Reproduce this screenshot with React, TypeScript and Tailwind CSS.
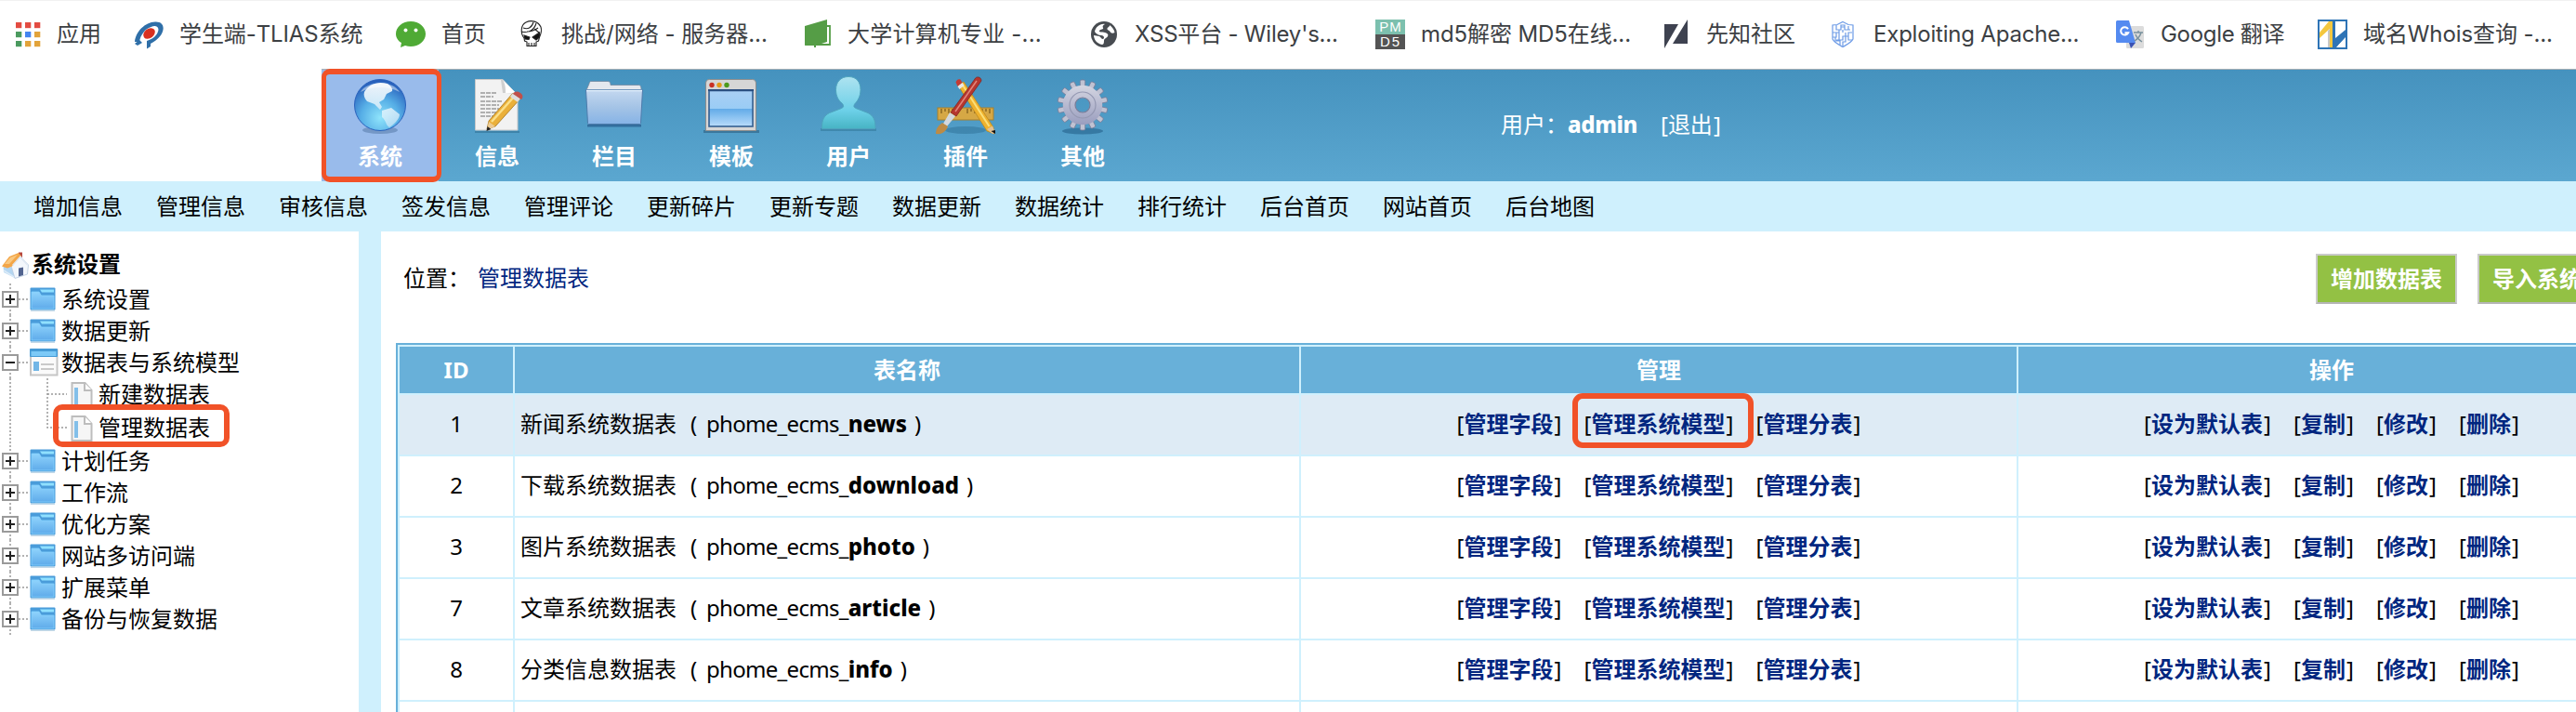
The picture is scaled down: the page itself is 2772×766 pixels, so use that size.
import type { ReactNode } from "react";

const ring = "pointer-events-none absolute border-[#f15228]";

function AppsIcon() {
  const colors = ["#e34b41", "#e34b41", "#e34b41", "#4b9a5f", "#4485f0", "#e2a33a", "#4b9a5f", "#e2a33a", "#e2a33a"];
  return (
    <svg viewBox="0 0 32 32" className="size-8">
      {colors.map((c, i) => (
        <rect key={i} x={5 + (i % 3) * 10} y={3 + Math.floor(i / 3) * 10} width="6.3" height="6.2" fill={c} />
      ))}
    </svg>
  );
}

function TliasIcon() {
  return (
    <svg viewBox="0 0 32 32" className="size-8">
      <path d="M1 24C2 13 12 3 23 2.500c9-.5 11 7 6 14.500-3 4-7 7-11 9v3l-4 2.500V23c7-2 12-7 12.500-12 0-4-4-5-8-3C12 10 7 17 6 24z" fill="#2f6fa8" />
      <path d="M1 26l5-4 3 3-5 3z" fill="#2f6fa8" />
      <ellipse cx="16.500" cy="15" rx="7" ry="5" transform="rotate(-38 16.500 15)" fill="#d8301f" />
    </svg>
  );
}

function ChatIcon() {
  return (
    <svg viewBox="0 0 32 32" className="size-8">
      <path d="M16 2c9 0 16 6 16 13.500S25 29 16 29c-2 0-4-.3-6-1l-5 2 1-5C2 23 0 19 0 15.500 0 8 7 2 16 2z" fill="#4faa35" />
      <circle cx="10.500" cy="11.500" r="2" fill="#fff" />
      <circle cx="21.500" cy="11.500" r="2" fill="#fff" />
    </svg>
  );
}

function SkullIcon() {
  return (
    <svg viewBox="0 0 32 32" className="size-8" fill="none" stroke="#222" strokeWidth="1.100">
      <path d="M9 20C5 15 5 6 11 3c6-3 13-1 16 5 1.500 5 0 8-1.500 11l-1 4-2.500 1v4.500H12V24l-2.500-1z" />
      <path d="M8 9c5 2 9 0 11-6M6 13c8 2 14-2 16-9M12 13c4 0 8-1 12-4M20 10l5 4" />
      <path d="M9 17l6 2-1 2.500-4-.5zM25.500 14L18 19l4 3 3.500-3z" fill="#111" />
      <path d="M14 25v3M17 25v3M20 25v3" />
    </svg>
  );
}

function BookIcon() {
  return (
    <svg viewBox="0 0 32 32" className="size-8">
      <path d="M3 7L27 0v24l-12 4v2h-2v-3H3z" fill="#559d46" />
      <path d="M27 7h3v20H15M4 24v3h9" fill="none" stroke="#559d46" strokeWidth="1.800" />
    </svg>
  );
}

function GlobeIcon() {
  return (
    <svg viewBox="0 0 32 32" className="size-8">
      <circle cx="16" cy="16" r="14" fill="#484c51" />
      <path d="M17 5c-2 1-3 2-2 4s-3 1-4 3 3 1 6 2 4 2 3 4-4 2-4 5-1 4-2 4C8 26 5 21 5 17l6 1c2 1 2 3 4 3 2-1 1-4-2-4-3 0-6-2-7-4C7 8 12 4 17 5zM22 6c3 2 5 5 5.500 8-2 1-4 1-5-1-1-2-3-1-3-3s3-2 2.500-4z" fill="#fff" />
    </svg>
  );
}

function PmIcon() {
  return (
    <span className="flex size-8 flex-col text-center font-['Liberation_Sans'] text-[15px] leading-4 tracking-[1px] text-white">
      <span className="h-4 bg-[#7cc0ae] pl-px">PM</span>
      <span className="h-4 bg-[#545454] pl-px tracking-[2px]">D5</span>
    </span>
  );
}

function XianzhiIcon() {
  return (
    <svg viewBox="0 0 32 32" className="size-8" fill="#3e4250">
      <path d="M4 5h15L4 31zM29 0v26H13z" />
    </svg>
  );
}

function ShieldIcon() {
  return (
    <svg viewBox="0 0 32 32" className="size-8" fill="none" stroke="#6d9be6" strokeWidth="1.200">
      <path d="M16 2.500l6 3 5 .5v15c-2 4-7 6-11 8.500C12 27 7 25 5 21V6l5-.5z" />
      <path d="M9 6v5h5V6h4v5h6M5 14h7v-3M9 14v5H5M12 14v8h4v-4h6v-4h4M16 14v-3M19 14v4M8 19v4h5v4M19 18v6h-3v5M22 18v4h4M14 8h4M22 7v4M9 22h3" />
    </svg>
  );
}

function TranslateIcon() {
  return (
    <svg viewBox="0 0 32 32" className="size-8">
      <rect x="12" y="7" width="19" height="24" rx="1.500" fill="#dcdcdc" />
      <path d="M15 25h7l-5 6z" fill="#3a52b4" />
      <path d="M2.500 1H15l7 24H2.500A1.500 1.500 0 0 1 1 23.500v-21A1.500 1.500 0 0 1 2.500 1z" fill="#548af0" />
      <path d="M14 10.200a4.200 4.200 0 1 0 .2 4H10.500" fill="none" stroke="#fff" strokeWidth="2" />
      <path d="M20 14h10M25 12v2M28 14c-1 4-4 7-7 9M22 16c1 3 4 6 7 8" fill="none" stroke="#78909c" strokeWidth="1.400" />
    </svg>
  );
}

function WhoisIcon() {
  return (
    <svg viewBox="0 0 32 32" className="size-8">
      <rect x="1" y="1" width="30" height="30" fill="#fff" stroke="#2e74b6" strokeWidth="2" />
      <path d="M2 14L12 2h4v28h-3V10L2 20z" fill="#f3c73f" />
      <path d="M13 10v20h-2V12z" fill="#c8c8c8" />
      <path d="M16 2h3v18L30 11v8L20 30h-4z" fill="#2e74b6" />
      <path d="M22 30v-2l8-8v10z" fill="#fff" />
    </svg>
  );
}

const bookmarks: { icon: ReactNode; label: string; box: string }[] = [
  { icon: <AppsIcon />, label: "应用", box: "w-[132px]" },
  { icon: <TliasIcon />, label: "学生端-TLIAS系统", box: "w-[282px] tracking-[-0.1px]" },
  { icon: <ChatIcon />, label: "首页", box: "w-[129px]" },
  { icon: <SkullIcon />, label: "挑战/网络 - 服务器...", box: "w-[308px] tracking-normal" },
  { icon: <BookIcon />, label: "大学计算机专业 -...", box: "w-[309px] tracking-[0.2px]" },
  { icon: <GlobeIcon />, label: "XSS平台 - Wiley's...", box: "w-[308px] tracking-[-0.2px]" },
  { icon: <PmIcon />, label: "md5解密 MD5在线...", box: "w-[307px] tracking-[-0.1px]" },
  { icon: <XianzhiIcon />, label: "先知社区", box: "w-[180px] tracking-normal" },
  { icon: <ShieldIcon />, label: "Exploiting Apache...", box: "w-[309px] tracking-[-0.2px]" },
  { icon: <TranslateIcon />, label: "Google 翻译", box: "w-[218px] tracking-[-0.3px]" },
  { icon: <WhoisIcon />, label: "域名Whois查询 -...", box: "w-[270px] tracking-[-0.1px]" },
];

function Bookmarks() {
  return (
    <div className="flex h-[74px] border-t border-[#f1f1f1] pl-3 font-[Inter,'Noto_Sans_CJK_SC',sans-serif] text-[24px] text-[#3c4043]">
      {bookmarks.map((b) => (
        <div key={b.label} className={`flex h-[71px] shrink-0 items-center gap-[17px] whitespace-nowrap ${b.box}`}>
          <span className="size-8 shrink-0">{b.icon}</span>
          <span>{b.label}</span>
        </div>
      ))}
    </div>
  );
}

function EarthIcon() {
  return (
    <svg viewBox="0 0 64 64" className="size-16">
      <defs>
        <radialGradient id="earth" cx=".5" cy=".75" r=".75">
          <stop offset="0" stopColor="#8fe4fb" />
          <stop offset=".5" stopColor="#56aee6" />
          <stop offset="1" stopColor="#2459b8" />
        </radialGradient>
        <linearGradient id="land" x1="0" y1="0" x2="0" y2="1">
          <stop offset="0" stopColor="#fff" />
          <stop offset="1" stopColor="#cfe9f8" />
        </linearGradient>
      </defs>
      <ellipse cx="32" cy="58" rx="19" ry="4" fill="#5c7fae" opacity=".6" />
      <circle cx="32" cy="31" r="27.500" fill="url(#earth)" stroke="#2a62bd" strokeWidth="1" />
      <path d="M15 17C20 8 30 5 40 8c3 2 6 5 5 8l-6 3-3 6-5 3 3 5-2 3-6-6-8-3c-3-3-4-7-3-10z" fill="url(#land)" opacity=".92" />
      <path d="M34 37l10-3 9 7c0 5-6 11-11 14-4-2-3-7-8-11z" fill="url(#land)" opacity=".7" />
      <path d="M11 17C18 5 45 4 53 17c-12-6-29-7-42 0z" fill="#fff" opacity=".45" />
    </svg>
  );
}

function NoteIcon() {
  return (
    <svg viewBox="0 0 64 64" className="size-16">
      <path d="M8 60h48" stroke="#2b6a8d" strokeWidth="2" opacity=".5" />
      <path d="M8.500 3.500H38l16 17V58H8.500z" fill="#f2f2f2" stroke="#c9c9c9" />
      <path d="M36 4l2 14c6 0 12 0 16 3L38 4z" fill="#cfcfcf" />
      <path d="M38 4l16 16c-4-2-9-2-13-2 0-5 0-9-3-14z" fill="#fff" />
      <path d="M14 18h17M14 22h14M14 27h24M14 31h20M14 35h20M14 39h17M14 43h14" stroke="#9b9b9b" strokeWidth="1.600" strokeDasharray="5 1" />
      <path d="M21 57l2-9 26-30 8 6-27 30z" fill="#eab03a" stroke="#a5741a" strokeWidth=".8" />
      <path d="M26 49l25-28" stroke="#fbe08a" strokeWidth="2.500" />
      <path d="M46 22l3-4 8 6-3 4z" fill="#dedede" />
      <path d="M49 19c2-3 5-3 8-1s3 5 1 7z" fill="#c0504a" />
      <path d="M21 58l2-9 7 5z" fill="#eccb94" />
      <path d="M20.500 59l1-5 4 3z" fill="#222" />
    </svg>
  );
}

function BigFolderIcon() {
  return (
    <svg viewBox="0 0 64 64" className="size-16">
      <defs>
        <linearGradient id="bigfolder" x1="0" y1="0" x2="0" y2="1">
          <stop offset="0" stopColor="#c4d8f0" />
          <stop offset=".5" stopColor="#a5c4e6" />
          <stop offset="1" stopColor="#86b3e6" />
        </linearGradient>
      </defs>
      <path d="M3 52h58v2.500H3z" fill="#1f4f80" opacity=".6" />
      <path d="M2 15l3-7c0-1.500 1-2.500 2-2.500h18c2 0 3 1 3 4h30c2 0 3 1 3 5z" fill="#e4e8ee" stroke="#71889f" strokeWidth=".8" />
      <path d="M1.500 14.500h61l-2 36q0 1-1 1H4.500q-1 0-1-1z" fill="url(#bigfolder)" stroke="#4e7bab" />
      <path d="M2 15.500h60" stroke="#e2f0fc" strokeWidth="1.500" />
    </svg>
  );
}

function WindowIcon() {
  return (
    <svg viewBox="0 0 64 64" className="size-16">
      <defs>
        <linearGradient id="glass" x1="0" y1="0" x2="0" y2="1">
          <stop offset="0" stopColor="#a9cff4" />
          <stop offset=".5" stopColor="#9accf5" />
          <stop offset=".51" stopColor="#62abe8" />
          <stop offset="1" stopColor="#b9dcfb" />
        </linearGradient>
      </defs>
      <path d="M2 58h60v3H2z" fill="#2d5f80" opacity=".6" />
      <path d="M4.500 58.500V8q0-4.500 4-4.500h46q4 0 4 4.500v50.500z" fill="#d6d6d6" stroke="#8d8d8d" />
      <rect x="8" y="15.500" width="47" height="38.500" fill="url(#glass)" stroke="#335f92" strokeWidth="1.600" />
      <path d="M7 15h49" stroke="#2b4f80" strokeWidth="2" />
      <circle cx="11" cy="9.500" r="2.700" fill="#c92f23" />
      <circle cx="19" cy="9.500" r="2.700" fill="#e39a18" />
      <circle cx="27" cy="9.500" r="2.700" fill="#4d9a1c" />
    </svg>
  );
}

function PersonIcon() {
  return (
    <svg viewBox="0 0 64 64" className="size-16">
      <defs>
        <linearGradient id="person" x1="0" y1="0" x2="0" y2="1">
          <stop offset="0" stopColor="#aee3f0" />
          <stop offset=".65" stopColor="#6cd0e8" />
          <stop offset="1" stopColor="#47b4c4" />
        </linearGradient>
      </defs>
      <path d="M2 56h60v3H2z" fill="#2d7394" opacity=".5" />
      <path d="M32 .5c9 0 13 6 13 14 0 7-3 12-6 15-2 3-1 4 1 5l13 5c6 3 8 8 8 15v2H3.500v-2c0-7 2-12 8-15l13-5c2-1 3-2 1-5-4-3-7-8-7-15 0-8 5-14 13.500-14z" fill="url(#person)" stroke="#4ea3bd" />
    </svg>
  );
}

function ToolsIcon() {
  return (
    <svg viewBox="0 0 64 64" className="size-16">
      <ellipse cx="32" cy="58" rx="22" ry="4" fill="#2e7095" opacity=".5" />
      <rect x="2" y="34" width="60" height="13" fill="#d6a845" stroke="#a9802b" />
      <path d="M6 35v5M10 35v3M14 35v5M18 35v3M34 35v5M38 35v3M42 35v5M50 35v5M54 35v3M58 35v5" stroke="#7a5a1c" strokeWidth="1.200" />
      <path d="M24 10l6-4 32 49 1 7-8-3z" fill="#efb22e" stroke="#b98419" strokeWidth=".7" />
      <path d="M28.500 9l29 45" stroke="#fbdf78" strokeWidth="2" />
      <path d="M21.500 6.500c1-3 3-4 5-3l2 3.500-5 4z" fill="#c43b35" />
      <path d="M23.500 11l5-4 2 3-5 4z" fill="#e8e8e8" />
      <path d="M55 57l6-3.500 3 7.500-3 1z" fill="#e0c197" />
      <path d="M59.500 59l4.500-1v4z" fill="#111" />
      <path d="M42 3c1-3 7-3 7 2L22 43l-6-4z" fill="#b6362e" stroke="#7d1f1b" strokeWidth=".7" />
      <path d="M44 5L21 38" stroke="#e0877c" strokeWidth="1.500" />
      <path d="M15 39l6 4-9 11-4-3z" fill="#d4d8dc" />
      <path d="M7 50l6 4c-2 5-6 9-13 8 0-6 3-9 7-12z" fill="#bd8b45" />
    </svg>
  );
}

function GearIcon() {
  return (
    <svg viewBox="0 0 64 64" className="size-16">
      <defs>
        <linearGradient id="gear" gradientUnits="userSpaceOnUse" x1="0" y1="4" x2="0" y2="60">
          <stop offset="0" stopColor="#dcdde6" />
          <stop offset="1" stopColor="#8f93b8" />
        </linearGradient>
      </defs>
      <ellipse cx="32" cy="59" rx="22" ry="3.500" fill="#24608a" opacity=".6" />
      <g fill="#c0c2d2" stroke="#777c98" strokeWidth=".8">
        {Array.from({ length: 14 }, (_, i) => (
          <rect key={i} x="29.300" y="4" width="5.400" height="12" rx="1.500" transform={`rotate(${(i * 360) / 14} 32 31)`} />
        ))}
      </g>
      <circle cx="32" cy="31" r="14.500" fill="none" stroke="url(#gear)" strokeWidth="13.500" />
      <circle cx="32" cy="31" r="14" fill="none" stroke="#9498b2" strokeWidth="1.200" />
      <circle cx="32" cy="31" r="8" fill="none" stroke="#777c98" strokeWidth="1.200" />
    </svg>
  );
}

const sections = [
  { label: "系统", icon: <EarthIcon />, active: true },
  { label: "信息", icon: <NoteIcon /> },
  { label: "栏目", icon: <BigFolderIcon /> },
  { label: "模板", icon: <WindowIcon /> },
  { label: "用户", icon: <PersonIcon /> },
  { label: "插件", icon: <ToolsIcon /> },
  { label: "其他", icon: <GearIcon /> },
];

function Header() {
  return (
    <header className="flex h-[121px]">
      <div className="w-[346px] shrink-0 bg-white" />
      <div className="flex grow border-t border-[#a9b0b5] bg-linear-to-b from-[#4592be] to-[#5ba7d0] text-[24px] text-white">
        {sections.map((s) => (
          <div
            key={s.label}
            className={`relative flex w-[126px] shrink-0 flex-col items-center pt-[7px] font-bold ${s.active ? "bg-[#99bbeb]" : ""}`}
          >
            {s.icon}
            <span className="mt-[5px] leading-[34px]">{s.label}</span>
            {s.active && <div className={`${ring} -top-px left-0 h-[122px] w-[129px] rounded-[9px] border-x-[5px] border-y-[6px]`} />}
          </div>
        ))}
        <div className="ml-[387px] flex h-[118px] items-center whitespace-nowrap">
          <span>用户：</span>
          <b className="font-extrabold tracking-[-0.4px]">admin</b>
          <span className="ml-[23px] w-[10px] text-right">[</span>
          <span>退出</span>
          <span className="ml-px">]</span>
        </div>
      </div>
    </header>
  );
}

const links = ["增加信息", "管理信息", "审核信息", "签发信息", "管理评论", "更新碎片", "更新专题", "数据更新", "数据统计", "排行统计", "后台首页", "网站首页", "后台地图"];

function Toggle({ open }: { open?: boolean }) {
  return (
    <svg viewBox="0 0 32 34" className="h-[34px] w-8 shrink-0" fill="none">
      <path d="M11 0v34M20 17h12" stroke="#999" strokeWidth="1.500" strokeDasharray="2 2" />
      <rect x="3" y="9" width="16" height="16" fill="#fff" stroke="#9a9a9a" strokeWidth="2" />
      <path d={open ? "M6 17h10" : "M6 17h10M11 12v10"} stroke="#222" strokeWidth="2" />
    </svg>
  );
}

function FolderIcon() {
  return (
    <svg viewBox="0 0 28 26" className="h-[26px] w-7 shrink-0">
      <defs>
        <linearGradient id="folder" x1="0" y1="0" x2="0" y2="1">
          <stop offset="0" stopColor="#8fd3fc" />
          <stop offset="1" stopColor="#5fabea" />
        </linearGradient>
      </defs>
      <rect x=".5" y=".5" width="27" height="24" rx="1" fill="#4a9cda" />
      <path d="M11 2.500h15v3H13z" fill="#8fe0ff" />
      <path d="M2 5h8l2.500 4H26v14H2z" fill="url(#folder)" stroke="#86d2ff" strokeWidth=".8" />
      <path d="M1 25.300h26" stroke="#b5cfe2" />
    </svg>
  );
}

function FormIcon() {
  return (
    <svg viewBox="0 0 31 30" className="h-[30px] w-[31px] shrink-0">
      <rect x="1" y="1.500" width="28.500" height="27" fill="#fafafa" stroke="#c6c6c6" strokeWidth="2" />
      <rect x="0" y="0" width="30" height="9" rx="1" fill="#469bd6" />
      <rect x="1.500" y="3" width="27" height="5" fill="#7cc9f7" />
      <rect x="4" y="14" width="6" height="10" fill="#72b6e6" />
      <path d="M12 17h14M12 22h14" stroke="#c9c9c9" strokeWidth="1.800" />
    </svg>
  );
}

function PageIcon() {
  return (
    <svg viewBox="0 0 24 28" className="h-7 w-6 shrink-0">
      <path d="M1.500 1h14l7 8v18h-21z" fill="#f6f6f6" stroke="#bdbdbd" strokeWidth="2" />
      <path d="M15 1v8h8" fill="#fff" stroke="#bdbdbd" strokeWidth="2" />
      <rect x="4" y="6" width="4" height="18" fill="#83bfe9" />
    </svg>
  );
}

function HomeIcon() {
  return (
    <svg viewBox="0 0 30 30" className="size-[30px] shrink-0">
      <path d="M18 1.500h4V9h-4z" fill="#b5463e" />
      <path d="M1.500 16L10 15l4 14-12-6z" fill="#b4d6f1" />
      <path d="M10 16L20 6l8.500 9-1 10L14 29.500z" fill="#f3f7fc" stroke="#b5c8dd" strokeWidth=".8" />
      <path d="M0 16.500L8 6l10-4 3 3.500-10 11-5 2z" fill="#f3a648" />
      <path d="M3 14l6-7 8-3-9 10z" fill="#f9c880" />
      <path d="M20 5l9 10-2 .5-7.500-8L12 16l-1-1z" fill="#dfe8f3" />
      <path d="M18 18.500l5-1V26l-5 1.500z" fill="#52648f" />
      <path d="M2 21l11 7" fill="none" stroke="#dcebf8" strokeWidth="1.500" />
    </svg>
  );
}

function Branch({ label }: { label: string }) {
  return (
    <div className="flex h-[34px] items-center">
      <Toggle />
      <span className="flex w-[34px] pb-px">
        <FolderIcon />
      </span>
      <span>{label}</span>
    </div>
  );
}

function Leaf({ label, last }: { label: string; last?: boolean }) {
  return (
    <div className="relative flex h-9 items-center">
      <svg viewBox="0 0 76 36" className="h-9 w-[76px] shrink-0" fill="none" stroke="#999" strokeWidth="1.500" strokeDasharray="2 2">
        <path d={last ? "M11 0v36M51 0v17h21" : "M11 0v36M51 0v36M51 17h21"} />
      </svg>
      <PageIcon />
      <span className="ml-[6px] pb-[2px]">{label}</span>
      {last && <div className={`${ring} -top-2 left-[57px] h-[46px] w-[190px] rounded-[10px] border-[6px]`} />}
    </div>
  );
}

function Sidebar() {
  return (
    <aside className="w-[386px] shrink-0 pt-[18px] text-[24px] leading-[34px] text-black">
      <div className="flex h-[38px] pl-[2px]">
        <span className="pt-[3px]">
          <HomeIcon />
        </span>
        <b className="ml-[2px]">系统设置</b>
      </div>
      <Branch label="系统设置" />
      <Branch label="数据更新" />
      <div className="flex h-[34px] items-center">
        <Toggle open />
        <span className="flex w-[34px]">
          <FormIcon />
        </span>
        <span>数据表与系统模型</span>
      </div>
      <Leaf label="新建数据表" />
      <Leaf label="管理数据表" last />
      <Branch label="计划任务" />
      <Branch label="工作流" />
      <Branch label="优化方案" />
      <Branch label="网站多访问端" />
      <Branch label="扩展菜单" />
      <Branch label="备份与恢复数据" />
    </aside>
  );
}

const rows = [
  { id: "1", name: "新闻系统数据表", table: "news" },
  { id: "2", name: "下载系统数据表", table: "download" },
  { id: "3", name: "图片系统数据表", table: "photo" },
  { id: "7", name: "文章系统数据表", table: "article" },
  { id: "8", name: "分类信息数据表", table: "info" },
  { id: "", name: "", table: "" },
];

function Action({ label, marked }: { label: string; marked?: boolean }) {
  return (
    <span className="relative flex">
      <span className="w-[9px] text-right">[</span>
      <b className="text-[#00267f]">{label}</b>
      <span className="w-[10px] pl-px">]</span>
      {marked && <div className={`${ring} -top-4 -left-3 h-[59px] w-[195px] rounded-[11px] border-[6px]`} />}
    </span>
  );
}

const cols = "grid grid-cols-[122px_844px_770px_674px] gap-[2px]";

function DataTable() {
  return (
    <div className="ml-4 flex w-[2420px] flex-col gap-[2px] border-2 border-[#68b0d9] bg-[#cff0fd] p-[2px] text-[24px] text-black">
      <div className={`${cols} h-[50px] text-center leading-[50px] font-bold text-white`}>
        <div className="bg-[#68b0d9]">ID</div>
        <div className="bg-[#68b0d9]">表名称</div>
        <div className="bg-[#68b0d9]">管理</div>
        <div className="bg-[#68b0d9]">操作</div>
      </div>
      {rows.map((r, i) => {
        const cell = `flex h-16 items-center whitespace-nowrap leading-[34px] pb-[2px] ${i === 0 ? "bg-[#deebf5]" : "bg-white"}`;
        return (
          <div key={i} className={`${cols} h-16`}>
            <div className={`${cell} justify-center`}>{r.id}</div>
            <div className={`${cell} pl-[6px]`}>
              {r.id && (
                <>
                  <span>{r.name}</span>
                  <span className="ml-[15px] w-[17px]">(</span>
                  <span className="tracking-[-0.7px]">phome_ecms_</span>
                  <b className="font-extrabold">{r.table}</b>
                  <span className="ml-[8px]">)</span>
                </>
              )}
            </div>
            <div className={`${cell} justify-center gap-[22px]`}>
              {r.id && (
                <>
                  <Action label="管理字段" />
                  <Action label="管理系统模型" marked={i === 0} />
                  <Action label="管理分表" />
                </>
              )}
            </div>
            <div className={`${cell} justify-center gap-[22px]`}>
              {r.id && (
                <>
                  <Action label="设为默认表" />
                  <Action label="复制" />
                  <Action label="修改" />
                  <Action label="删除" />
                </>
              )}
            </div>
          </div>
        );
      })}
    </div>
  );
}

function GreenButton({ label }: { label: string }) {
  return (
    <button className="h-[54px] shrink-0 border-2 border-[#cacaca] border-b-[#b5b5b5] bg-[#93c144] px-[14px] font-bold whitespace-nowrap text-white">
      {label}
    </button>
  );
}

export default function App() {
  return (
    <div className="h-[766px] w-[2772px] overflow-hidden bg-white font-['Noto_Sans','Noto_Sans_CJK_SC',sans-serif]">
      <Bookmarks />
      <Header />
      <nav className="flex h-[54px] items-center gap-9 bg-[#cff0fd] pl-9 text-[24px] text-black">
        {links.map((l) => (
          <span key={l}>{l}</span>
        ))}
      </nav>
      <div className="flex h-[517px]">
        <Sidebar />
        <div className="w-6 shrink-0 bg-[#cff0fd]" />
        <main className="w-[2362px] shrink-0 overflow-hidden">
          <div className="flex h-[120px] items-start pt-6 pl-6 text-[24px] leading-[50px] text-black">
            <span className="w-[80px] shrink-0 pt-px">位置：</span>
            <span className="w-[1978px] shrink-0 pt-px text-[#00267f]">管理数据表</span>
            <div className="flex shrink-0 gap-[22px]">
              <GreenButton label="增加数据表" />
              <GreenButton label="导入系统模型" />
            </div>
          </div>
          <DataTable />
        </main>
      </div>
    </div>
  );
}
